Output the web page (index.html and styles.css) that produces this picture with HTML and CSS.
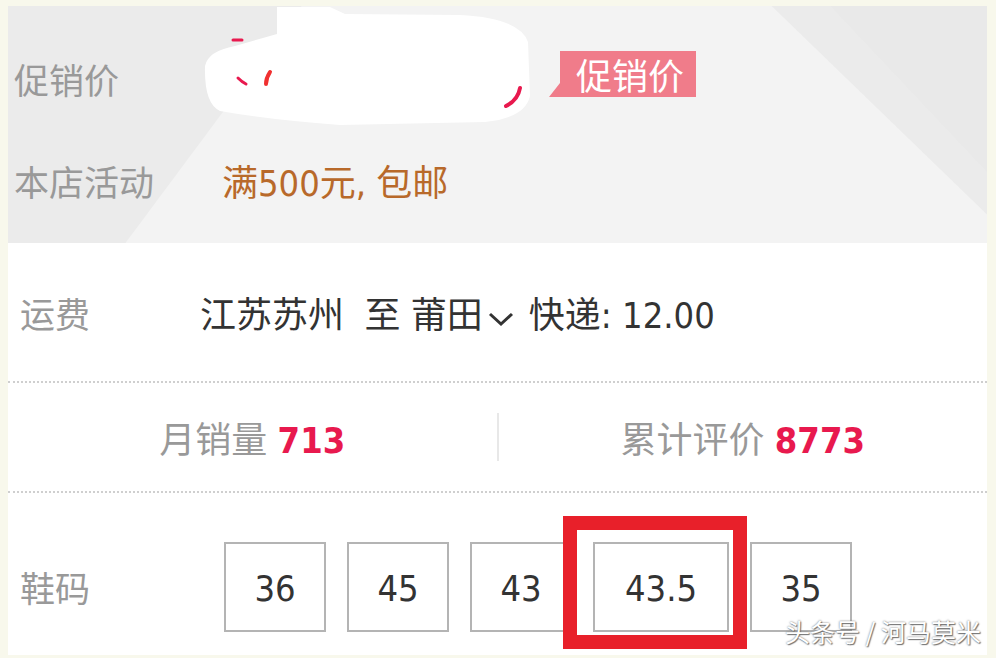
FILE: index.html
```html
<!DOCTYPE html>
<html>
<head>
    <title>商品详情</title>
    <link rel="stylesheet" href="styles.css">
</head>
<body>
    <div class="page">
        <div class="promo">
            <svg class="blob" width="340" height="124" viewBox="0 0 340 124">
                <path d="M77 1 L130 1 L145 8 L260 9 Q320 12 328 36 L330 90 Q325 112 285 116 L140 119 Q70 114 20 105 Q4 98 5 60 Q8 45 35 40 L77 28 Z" fill="#fff"/>
                <path d="M33 34 l9 0" stroke="#e8194e" stroke-width="3" stroke-linecap="round"/>
                <path d="M38 72 q4 4 8 6" stroke="#e8194e" stroke-width="3" fill="none" stroke-linecap="round"/>
                <path d="M70 66 q-4 6 -4 12" stroke="#f03030" stroke-width="4" fill="none" stroke-linecap="round"/>
                <path d="M320 82 q-2 12 -14 18" stroke="#e8194e" stroke-width="4" fill="none" stroke-linecap="round"/>
            </svg>
            <div class="row row-price">
                <span class="label">促销价</span>
                <span class="price-gap"></span>
                <span class="badge">促销价</span>
            </div>
            <div class="row row-shop">
                <span class="label">本店活动</span>
                <span class="shop-value">满500元, 包邮</span>
            </div>
        </div>

        <div class="main">
            <div class="line line-ship">
                <span class="label label-main">运费</span>
                <span class="ship-value">
                    江苏苏州&nbsp;&nbsp;至&nbsp;莆田<svg class="chev" width="28" height="18" viewBox="0 0 28 18"><path d="M3 4 L14 14 L25 4" stroke="#333" stroke-width="3" fill="none"/></svg>快递: 12.00
                </span>
            </div>
            <div class="line line-stats">
                <div class="stat">月销量 <b>713</b></div>
                <div class="stat-divider"></div>
                <div class="stat">累计评价 <b>8773</b></div>
            </div>
            <div class="line line-size">
                <span class="label label-main">鞋码</span>
                <div class="sizes">
                    <span class="size">36</span>
                    <span class="size">45</span>
                    <span class="size">43</span>
                    <span class="size size-wide">43.5<i class="mark"></i></span>
                    <span class="size">35</span>
                </div>
            </div>
            <div class="watermark">头条号 / 河马莫米</div>
        </div>
    </div>
</body>
</html>
```

FILE: styles.css
```css
body {
    margin: 0;
    background-color: #f8f8ec;
    font-family: "DejaVu Sans Condensed", "Noto Sans CJK SC", sans-serif;
}

.page {
    width: 979px;
    padding: 6px 0 3px 8px;
}

.promo {
    position: relative;
    height: 237px;
    padding-top: 20px;
    box-sizing: border-box;
    background-color: #ebebeb;
    overflow: hidden;
}

.promo::before {
    content: "";
    position: absolute;
    left: 0;
    top: 0;
    right: 0;
    bottom: 0;
    background-color: #f3f3f3;
    clip-path: polygon(12% 100%, 30% 0, 78% 0, 100% 88%, 100% 100%);
}

.promo::after {
    content: "";
    position: absolute;
    left: 0;
    top: 0;
    right: 0;
    bottom: 0;
    background-color: #e9e9e9;
    clip-path: polygon(84% 0, 100% 0, 100% 70%);
}

.blob {
    position: absolute;
    left: 192px;
    top: 0;
    z-index: 1;
}

.row {
    position: relative;
    z-index: 2;
    display: flex;
    align-items: center;
    padding-left: 6px;
}

.row-price {
    height: 104px;
}

.row-shop {
    height: 100px;
}

.label {
    font-family: "Noto Sans CJK SC", sans-serif;
    font-size: 35px;
    color: #999;
    width: 208px;
}

.price-gap {
    width: 338px;
}

.badge {
    position: relative;
    font-family: "Noto Sans CJK SC", sans-serif;
    font-size: 36px;
    line-height: 46px;
    height: 46px;
    padding: 0 12px 0 16px;
    margin-top: -8px;
    color: #fff;
    background-color: #f07c8a;
}

.badge::before {
    content: "";
    position: absolute;
    left: -11px;
    bottom: 0;
    border-bottom: 14px solid #f07c8a;
    border-left: 11px solid transparent;
}

.shop-value {
    font-size: 36px;
    color: #b8692a;
}

.main {
    position: relative;
    background-color: #fff;
    height: 412px;
}

.line {
    display: flex;
    align-items: center;
    border-bottom: 2px dotted #cfcfcf;
}

.line-ship {
    height: 138px;
}

.label-main {
    padding-left: 12px;
    width: 180px;
}

.ship-value {
    font-size: 36px;
    color: #333;
    white-space: nowrap;
}

.chev {
    margin: 0 14px 0 4px;
}

.line-stats {
    height: 108px;
}

.stat {
    flex: 1;
    text-align: center;
    font-size: 36px;
    color: #999;
}

.stat b {
    color: #e8194e;
}

.stat-divider {
    width: 2px;
    height: 48px;
    background-color: #e8e8e8;
}

.line-size {
    border-bottom: 0;
    align-items: flex-start;
    padding-top: 49px;
}

.line-size .label-main {
    line-height: 90px;
    width: 204px;
}

.sizes {
    display: flex;
    gap: 21px;
}

.size {
    position: relative;
    width: 98px;
    height: 86px;
    line-height: 90px;
    text-align: center;
    font-size: 36px;
    color: #333;
    border: 2px solid #b4b4b4;
}

.size-wide {
    width: 132px;
}

.mark {
    position: absolute;
    left: -32px;
    top: -28px;
    right: -20px;
    bottom: -19px;
    border: 14px solid #e8202a;
}

.watermark {
    position: absolute;
    right: 6px;
    bottom: 6px;
    font-family: "Noto Sans CJK SC", sans-serif;
    font-size: 25px;
    color: #fff;
    text-shadow: 0 0 2px #666, 1px 1px 1px #777;
}
```
